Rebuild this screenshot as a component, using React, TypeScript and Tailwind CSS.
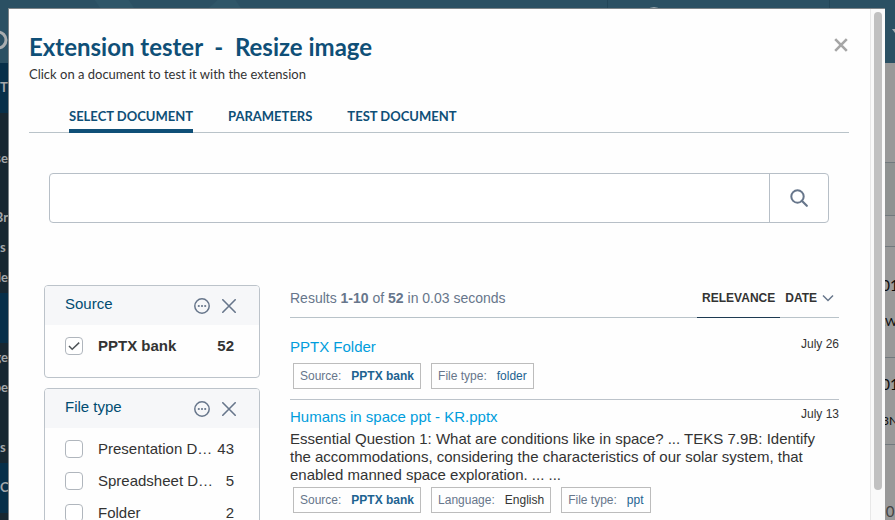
import React from "react";

type Facet = { title: string; values: { label: string; count: number; checked?: boolean }[] };
type Field = { label: string; value: string; tone: "strong" | "link" | "plain" };
type Result = { title: string; date: string; excerpt?: string; fields: Field[] };

const facets: Facet[] = [
  { title: "Source", values: [{ label: "PPTX bank", count: 52, checked: true }] },
  {
    title: "File type",
    values: [
      { label: "Presentation Document", count: 43 },
      { label: "Spreadsheet Document", count: 5 },
      { label: "Folder", count: 2 },
    ],
  },
];

const results: Result[] = [
  {
    title: "PPTX Folder",
    date: "July 26",
    fields: [
      { label: "Source:", value: "PPTX bank", tone: "strong" },
      { label: "File type:", value: "folder", tone: "link" },
    ],
  },
  {
    title: "Humans in space ppt - KR.pptx",
    date: "July 13",
    excerpt:
      "Essential Question 1: What are conditions like in space? ... TEKS 7.9B: Identify the accommodations, considering the characteristics of our solar system, that enabled manned space exploration. ... ...",
    fields: [
      { label: "Source:", value: "PPTX bank", tone: "strong" },
      { label: "Language:", value: "English", tone: "plain" },
      { label: "File type:", value: "ppt", tone: "link" },
    ],
  },
];

const tones = {
  strong: "font-bold text-[#1d6391]",
  link: "text-[#1d6391]",
  plain: "text-[#333333]",
};

function SideItem({ text, className }: { text: string; className: string }) {
  const align = text.length > 1 ? "justify-end" : "justify-start";
  return <div className={`flex shrink-0 items-center overflow-hidden ${align} ${className}`}>{text}</div>;
}

function Backdrop() {
  return (
    <div aria-hidden="true" className="flex h-full flex-col bg-[#999999] font-['Lato',sans-serif]">
      <header className="flex h-[63px] shrink-0 bg-[#2b5063]">
        <div className="min-w-0 flex-[608] border-r border-[#234658]">
          <svg className="h-full w-full" viewBox="0 0 608 63" preserveAspectRatio="none">
            <path d="M95 0h34l8 12h-34zM205 12 218 0h18l8 12z" fill="#2f5668" />
            <circle cx="-2" cy="40" r="8" fill="none" stroke="#a9adaf" strokeWidth="3" />
          </svg>
        </div>
        <div className="min-w-0 flex-[222] border-r border-[#234658]">
          <div className="ml-9 mt-[7px] h-5 w-5 rounded-full bg-[#9aa7ad]" />
        </div>
        <div className="flex min-w-0 flex-[65] justify-end pt-[29px]">
          <svg className="h-1 w-[3px]" viewBox="0 0 3 4">
            <path d="M0 0h3v4z" fill="#a5afb4" />
          </svg>
        </div>
      </header>
      <div className="flex min-h-0 flex-1 justify-between">
        <div className="flex w-2 shrink-0 flex-col overflow-hidden bg-[#172731] text-[13px] font-bold text-[#a2a6a9]">
          <SideItem text="T" className="h-[50px] bg-[#072f49]" />
          <SideItem text="se" className="mt-[31px] h-[30px]" />
          <SideItem text="Br" className="mt-[29px] h-[30px]" />
          <SideItem text="s" className="h-[30px]" />
          <SideItem text="de" className="h-[30px]" />
          <SideItem text="" className="h-[50px] bg-[#072f49]" />
          <SideItem text="ge" className="h-[30px]" />
          <SideItem text="pe" className="h-[30px]" />
          <SideItem text="" className="h-[30px]" />
          <SideItem text="s" className="h-[30px]" />
          <SideItem text="C" className="h-[50px] bg-[#072f49]" />
        </div>
        <div className="flex w-[10px] shrink-0 flex-col overflow-hidden text-[15px] leading-5 text-[#0c0c0c]">
          <div className="h-[100px] shrink-0 border-b border-[#72797d]" />
          <div className="h-[53px] shrink-0 border-b border-[#72797d] bg-[#8f9291]" />
          <div className="h-[31px] shrink-0 border-b border-[#72797d]" />
          <div className="flex h-[111px] shrink-0 flex-col items-center border-b border-[#72797d] pt-7">
            <span className="h-[37px]">01</span>
            <span className="text-[12px]">.W</span>
          </div>
          <div className="flex h-[87px] shrink-0 flex-col items-center border-b border-[#72797d] pt-4">
            <span className="h-[37px]">01</span>
            <span className="text-[12px]">3N</span>
          </div>
          <div className="flex shrink-0 justify-center pt-14 text-[#444444]">0</div>
        </div>
      </div>
    </div>
  );
}

function FacetCard({ facet }: { facet: Facet }) {
  return (
    <section className="overflow-hidden rounded-[4px] border border-[#bcc3ca]">
      <header className="flex h-[39px] items-center bg-[#f6f7f9] pl-5 pr-[23px]">
        <h2 className="flex-1 pb-1 text-[15px] leading-[18px] text-[#004c72]">{facet.title}</h2>
        <button type="button" aria-label={`Settings for ${facet.title}`} className="mr-3">
          <svg width="16" height="16" viewBox="0 0 16 16" fill="none" stroke="#67768b">
            <circle cx="8" cy="8" r="7.2" strokeWidth="1.5" />
            <g fill="#67768b" stroke="none">
              <circle cx="4.8" cy="8" r="1.1" />
              <circle cx="8" cy="8" r="1.1" />
              <circle cx="11.2" cy="8" r="1.1" />
            </g>
          </svg>
        </button>
        <button type="button" aria-label={`Clear ${facet.title}`}>
          <svg width="14" height="14" viewBox="0 0 14 14" fill="none" stroke="#67768b" strokeWidth="1.6" strokeLinecap="round">
            <path d="m.8.8 12.4 12.4M13.2.8.8 13.2" />
          </svg>
        </button>
      </header>
      <ul className="pb-[15px] pt-[5px]">
        {facet.values.map((v) => (
          <li key={v.label}>
            <label className={`flex h-8 items-center pl-5 pr-[25px] text-[15px] text-[#333333] ${v.checked ? "font-bold" : ""}`}>
              <span className="relative mr-[15px] h-[18px] w-[18px] shrink-0">
                <input
                  type="checkbox"
                  defaultChecked={v.checked}
                  className="peer block h-full w-full appearance-none rounded-[4px] border border-[#b0b6bd] bg-white"
                />
                <svg
                  className="pointer-events-none absolute inset-0 hidden peer-checked:block"
                  viewBox="0 0 18 18"
                  fill="none"
                  stroke="#4f5559"
                  strokeWidth="1.5"
                >
                  <path d="m4 9 3.2 3.2 7-6.6" />
                </svg>
              </span>
              <span className="min-w-0 flex-1 truncate">{v.label}</span>
              <span className="ml-[5px]">{v.count}</span>
            </label>
          </li>
        ))}
      </ul>
    </section>
  );
}

function ResultItem({ result }: { result: Result }) {
  return (
    <article className="border-b border-[#bcc3ca] pb-[10px] pt-2">
      <div className="flex justify-between">
        <a href="#result" className="text-[15px] leading-[18px] text-[#009ddc]">
          {result.title}
        </a>
        <time className="text-[12px] leading-3 text-[#333333]">{result.date}</time>
      </div>
      {result.excerpt && <p className="mt-1 text-[15px] leading-[18px] text-[#333333]">{result.excerpt}</p>}
      <dl className={`ml-[3px] flex gap-[10px] text-[12px] ${result.excerpt ? "mt-[3px]" : "mt-[7px]"}`}>
        {result.fields.map((f) => (
          <div key={f.label} className="flex h-[26px] items-center gap-[10px] border border-[#bcbcbc] px-[6px]">
            <dt className="text-[#67768b]">{f.label}</dt>
            <dd className={tones[f.tone]}>{f.value}</dd>
          </div>
        ))}
      </dl>
    </article>
  );
}

export default function App() {
  return (
    <div className="relative h-screen overflow-hidden font-['Liberation_Sans',Arial,sans-serif]">
      <Backdrop />
      <div
        role="dialog"
        aria-label="Extension tester"
        className="absolute bottom-0 left-2 right-[10px] top-2 flex overflow-hidden border-l border-t border-[#7c8387] bg-[#fefefe]"
      >
        <div className="min-w-0 flex-1">
          <header className="flex items-start justify-between pl-5 pr-[22px] pt-6 font-['Lato',sans-serif]">
            <div>
              <h1 className="whitespace-pre text-[24px] font-bold leading-7 text-[#0f4f77]">
                {"Extension tester  -  Resize image"}
              </h1>
              <p className="mt-[5px] text-[13px] leading-4 text-[#333333]">Click on a document to test it with the extension</p>
            </div>
            <button type="button" aria-label="Close" className="mt-[5px]">
              <svg width="14" height="14" viewBox="0 0 14 14" fill="none" stroke="#a6a6a6" strokeWidth="2.6">
                <path d="m1.2 1.2 11.6 11.6M12.8 1.2 1.2 12.8" />
              </svg>
            </button>
          </header>
          <nav className="ml-5 mr-[21px] mt-6 flex gap-[35px] border-b border-[#b9c3c9] pl-10 font-['Lato',sans-serif] text-[13px] font-bold leading-5 text-[#0f4f77]">
            <button type="button" className="-mb-px border-b-4 border-[#0f4f77] pb-[3px]">
              SELECT DOCUMENT
            </button>
            <button type="button" className="-mb-px border-b-4 border-transparent pb-[3px]">
              PARAMETERS
            </button>
            <button type="button" className="-mb-px border-b-4 border-transparent pb-[3px]">
              TEST DOCUMENT
            </button>
          </nav>
          <form className="ml-10 mr-[41px] mt-10 flex h-[50px] rounded-[4px] border border-[#b7bfc7] bg-white" onSubmit={(e) => e.preventDefault()}>
            <input type="text" aria-label="Search" className="min-w-0 flex-1 rounded-l-[4px] px-4 outline-none" />
            <button type="submit" aria-label="Run search" className="flex w-[59px] items-center justify-center border-l border-[#b7bfc7]">
              <svg width="18" height="18" viewBox="0 0 18 18" fill="none" stroke="#67768b" strokeWidth="2">
                <circle cx="7.5" cy="7.5" r="6.2" />
                <path d="m11.8 11.8 5 5" strokeWidth="2.2" strokeLinecap="round" />
              </svg>
            </button>
          </form>
          <div className="ml-[35px] mr-[31px] mt-[62px] flex items-start gap-[30px]">
            <aside className="flex w-[216px] shrink-0 flex-col gap-[10px]">
              {facets.map((f) => (
                <FacetCard key={f.title} facet={f} />
              ))}
            </aside>
            <main className="min-w-0 flex-1">
              <div className="mb-3 flex h-[33px] justify-between border-b border-[#b9c3c9]">
                <p className="pt-1 text-[14px] leading-[18px] text-[#67768b]">
                  Results <b>1-10</b> of <b>52</b> in 0.03 seconds
                </p>
                <div className="flex text-[12px] font-bold leading-[18px] text-[#333333]">
                  <button type="button" className="-mb-px flex border-b border-[#1d3a52] px-[5px] pt-1">
                    RELEVANCE
                  </button>
                  <button type="button" className="flex h-[22px] items-center gap-[5px] px-[5px] pt-1">
                    DATE
                    <svg width="12" height="8" viewBox="0 0 12 8" fill="none" stroke="#67768b" strokeWidth="1.5">
                      <path d="m1 1.5 5 5 5-5" />
                    </svg>
                  </button>
                </div>
              </div>
              {results.map((r) => (
                <ResultItem key={r.title} result={r} />
              ))}
            </main>
          </div>
        </div>
        <div aria-hidden="true" className="w-[15px] shrink-0 border-l border-[#e8e8e8] bg-[#fafafa] px-[3px] pt-[3px]">
          <div className="h-[94%] w-2 rounded-full bg-[#c1c1c1]" />
        </div>
      </div>
    </div>
  );
}
